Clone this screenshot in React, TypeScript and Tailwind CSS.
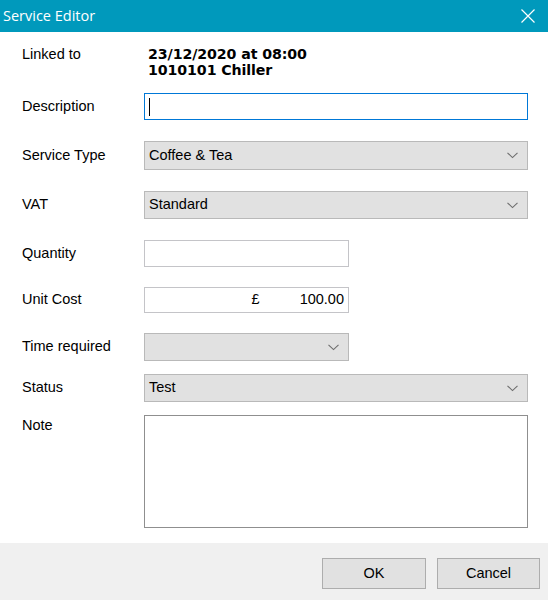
import React from 'react'

const label = 'w-[144px] shrink-0 pl-[22px] text-[14.5px] text-black'
const textBox = 'border border-[#c4c4c8] bg-white'
const combo =
  'flex items-center justify-between border border-[#b9b9b9] bg-[#e1e1e1] pl-[4px] pr-[9px] text-[14.5px] text-black'

function Chevron() {
  return (
    <svg width="11" height="7" viewBox="0 0 11 7" fill="none">
      <path d="M0.5 0.8 L5.5 5.6 L10.5 0.8" stroke="#6d6d6d" strokeWidth="1.1" />
    </svg>
  )
}

function Combo({ value, width }: { value: string; width: string }) {
  return (
    <div className={`${combo} ${width} h-full`}>
      <span>{value}</span>
      <Chevron />
    </div>
  )
}

export default function App() {
  return (
    <div className="flex h-[600px] w-[548px] flex-col bg-white font-['Liberation_Sans',Arial,sans-serif]">
      {/* title bar */}
      <div className="flex h-[32px] shrink-0 items-center justify-between bg-[#0099bc] pl-[3px] pr-[13px]">
        <span className="font-['Open_Sans',sans-serif] text-[14.5px] text-white">
          Service Editor
        </span>
        <svg width="14" height="14" viewBox="0 0 14 14">
          <path d="M0.5 0.5 L13.5 13.5 M13.5 0.5 L0.5 13.5" stroke="white" strokeWidth="1.2" />
        </svg>
      </div>

      <div className="flex-1">
        <div className="mt-[14px] flex">
          <div className={`${label} leading-[16px]`}>Linked to</div>
          <div className="pl-[4px] font-['DejaVu_Sans',sans-serif] text-[14.2px] font-bold leading-[16px] tracking-[-0.1px] text-black">
            <div>23/12/2020 at 08:00</div>
            <div>1010101 Chiller</div>
          </div>
        </div>

        <div className="mt-[15px] flex h-[27px] items-center">
          <div className={label}>Description</div>
          <div className="flex h-full w-[384px] items-center border border-[#0078d7] bg-white pl-[4px]">
            <span className="h-[18px] w-px bg-black" />
          </div>
        </div>

        <div className="mt-[21px] flex h-[29px] items-center">
          <div className={label}>Service Type</div>
          <Combo value="Coffee & Tea" width="w-[384px]" />
        </div>

        <div className="mt-[21px] flex h-[28px] items-center">
          <div className={label}>VAT</div>
          <Combo value="Standard" width="w-[384px]" />
        </div>

        <div className="mt-[21px] flex h-[27px] items-center">
          <div className={label}>Quantity</div>
          <div className={`${textBox} h-full w-[205px]`} />
        </div>

        <div className="mt-[20px] flex h-[26px] items-center">
          <div className={label}>Unit Cost</div>
          <div
            className={`${textBox} flex h-full w-[205px] items-center justify-end gap-[40px] pr-[4px] text-[14.5px] text-black`}
          >
            <span>£</span>
            <span>100.00</span>
          </div>
        </div>

        <div className="mt-[20px] flex h-[28px] items-center">
          <div className={label}>Time required</div>
          <Combo value="" width="w-[205px]" />
        </div>

        <div className="mt-[13px] flex h-[28px] items-center">
          <div className={label}>Status</div>
          <Combo value="Test" width="w-[384px]" />
        </div>

        <div className="mt-[13px] flex h-[113px]">
          <div className={`${label} pt-[2px] leading-[16px]`}>Note</div>
          <div className="h-full w-[384px] border border-[#8f8f8f] bg-white" />
        </div>
      </div>

      {/* button strip */}
      <div className="flex h-[57px] shrink-0 justify-end gap-[11px] bg-[#f0f0f0] pr-[8px] pt-[15px]">
        <button className="h-[31px] w-[104px] border border-[#adadad] bg-[#e1e1e1] text-[14.5px] text-black">
          OK
        </button>
        <button className="h-[31px] w-[103px] border border-[#adadad] bg-[#e1e1e1] text-[14.5px] text-black">
          Cancel
        </button>
      </div>
    </div>
  )
}
